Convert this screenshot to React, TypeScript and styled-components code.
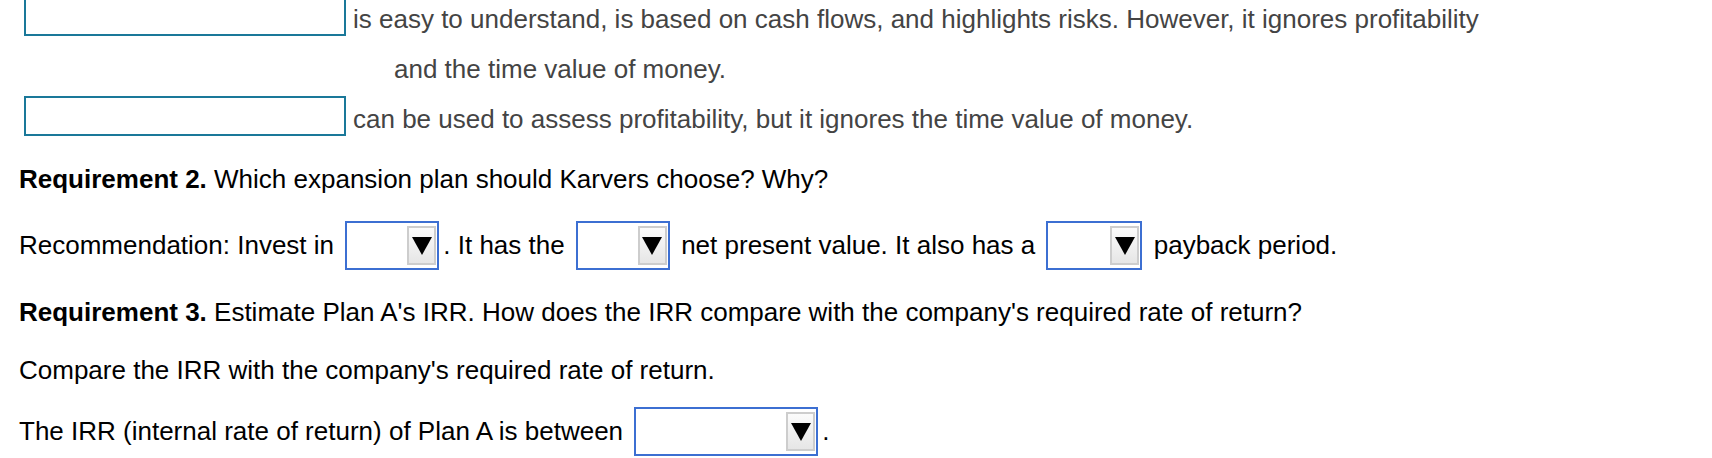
import styled, { createGlobalStyle } from 'styled-components'

const GlobalStyle = createGlobalStyle`
  html, body {
    margin: 0;
    padding: 0;
    background: #fff;
  }
  body {
    font-family: 'Liberation Sans', Arial, Helvetica, sans-serif;
    font-size: 26px;
    color: #000;
    overflow: hidden;
  }
`

const Page = styled.div`
  width: 1712px;
  height: 458px;
  overflow: hidden;
  padding-left: 19px;
  box-sizing: border-box;
`

const AnswerList = styled.div`
  margin-top: -4px;
  color: #444;
`

const AnswerRow = styled.div<{ $gap?: number }>`
  display: flex;
  align-items: flex-start;
  margin-top: ${({ $gap }) => $gap ?? 0}px;
  margin-left: 5px;
`

const AnswerBox = styled.div`
  flex-shrink: 0;
  width: 322px;
  height: 40px;
  border: 2px solid #1a7899;
  box-sizing: border-box;
  background: #fff;
`

const AnswerText = styled.div`
  margin-left: 7px;
  margin-top: -2px;
  line-height: 50px;
  white-space: nowrap;
`

const Continuation = styled.span`
  display: block;
  padding-left: 41px;
`

const Para = styled.p<{ $gap: number }>`
  margin: ${({ $gap }) => $gap}px 0 0;
  line-height: 30px;
  white-space: nowrap;
`

const SentenceRow = styled.div<{ $gap: number }>`
  display: flex;
  align-items: center;
  height: 49px;
  margin-top: ${({ $gap }) => $gap}px;
  white-space: pre;
`

const SelectBox = styled.span<{ $width: number }>`
  display: inline-flex;
  justify-content: flex-end;
  align-items: center;
  width: ${({ $width }) => $width}px;
  height: 49px;
  margin: 0 4px;
  padding-right: 1px;
  border: 2px solid #3c6fd2;
  box-sizing: border-box;
  background: #fff;
`

const ArrowButton = styled.span`
  display: flex;
  align-items: center;
  justify-content: center;
  width: 29px;
  height: 39px;
  border: 2px solid #cdcdcd;
  box-sizing: border-box;
  background: linear-gradient(#fbfbfb, #e6e6e6);
`

function Dropdown({ width }: { width: number }) {
  return (
    <SelectBox $width={width}>
      <ArrowButton>
        <svg width="20" height="18" viewBox="0 0 20 18">
          <polygon points="0,0 20,0 10,18" fill="#000" />
        </svg>
      </ArrowButton>
    </SelectBox>
  )
}

export default function App() {
  return (
    <Page>
      <GlobalStyle />
      <AnswerList>
        <AnswerRow>
          <AnswerBox />
          <AnswerText>
            is easy to understand, is based on cash flows, and highlights risks. However, it ignores profitability
            <Continuation>and the time value of money.</Continuation>
          </AnswerText>
        </AnswerRow>
        <AnswerRow $gap={2}>
          <AnswerBox />
          <AnswerText>can be used to assess profitability, but it ignores the time value of money.</AnswerText>
        </AnswerRow>
      </AnswerList>

      <Para $gap={20}>
        <b>Requirement 2.</b> Which expansion plan should Karvers choose? Why?
      </Para>

      <SentenceRow $gap={27}>
        {'Recommendation: Invest in '}
        <Dropdown width={94} />
        {'. It has the '}
        <Dropdown width={94} />
        {' net present value. It also has a '}
        <Dropdown width={96} />
        {' payback period.'}
      </SentenceRow>

      <Para $gap={27}>
        <b>Requirement 3.</b> Estimate Plan A's IRR. How does the IRR compare with the company's required rate of return?
      </Para>

      <Para $gap={28}>Compare the IRR with the company's required rate of return.</Para>

      <SentenceRow $gap={22}>
        {'The IRR (internal rate of return) of Plan A is between '}
        <Dropdown width={184} />
        {'.'}
      </SentenceRow>
    </Page>
  )
}
